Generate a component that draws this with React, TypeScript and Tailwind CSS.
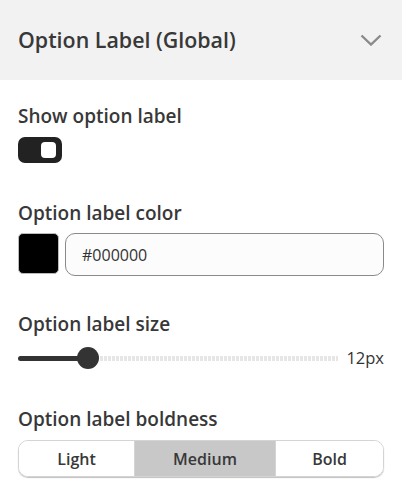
import { useState } from 'react';

const font = { fontFamily: '"Open Sans", "Noto Sans", sans-serif' };

function Label({ children, className = '' }: { children: string; className?: string }) {
  return (
    <div className={`text-[19px] leading-[24px] font-[550] text-[#383838] ${className}`}>{children}</div>
  );
}

const options = [
  { name: 'Light', width: 'w-[115px]' },
  { name: 'Medium', width: 'w-[141px]' },
  { name: 'Bold', width: 'flex-1' },
];

export default function App() {
  const [weight, setWeight] = useState('Medium');
  const [on, setOn] = useState(true);

  return (
    <div className="w-[402px] h-[492px] bg-white overflow-hidden" style={font}>
      <div className="h-20 bg-[#f2f2f2] pl-[18px] pr-[20px] flex items-center justify-between">
        <h2 className="text-[21.4px] font-[550] text-[#383838]">Option Label (Global)</h2>
        <svg width="22" height="12" viewBox="0 0 22 12" fill="none">
          <polyline points="1.5,1.5 11,10.5 20.5,1.5" stroke="#8a8a8a" strokeWidth="2.4" />
        </svg>
      </div>

      <div className="px-[18px]">
        <Label className="mt-6">Show option label</Label>
        <button
          onClick={() => setOn(!on)}
          className="mt-[9px] w-[44px] h-[26px] rounded-[7px] bg-[#222] flex items-center justify-end pr-[6px]"
        >
          <span className="w-[15px] h-[16px] rounded-[4px] bg-white" />
        </button>

        <Label className="mt-[38px]">Option label color</Label>
        <div className="mt-2 flex gap-[6px] items-start">
          <div className="w-[41px] h-[41px] rounded-[5px] bg-black border border-[#bbb]" />
          <div className="flex-1 h-[43px] rounded-[10px] border border-[#8a8a8a] bg-[#fcfcfc] flex items-center px-4 text-[16px] text-[#333]">
            #000000
          </div>
        </div>

        <Label className="mt-9">Option label size</Label>
        <div className="mt-[10px] h-6 flex items-center">
          <div className="relative w-[320px] h-6 flex items-center">
            <div className="w-[70px] h-[5px] rounded-full bg-[#333]" />
            <div className="ml-[12px] flex-1 h-[5px] bg-[repeating-linear-gradient(90deg,#e6e6e6_0_3px,transparent_3px_4px)]" />
            <div className="absolute left-[59px] top-[1px] w-[22px] h-[22px] rounded-full bg-[#333]" />
          </div>
          <span className="ml-auto text-[16.5px] text-[#333]">12px</span>
        </div>

        <Label className="mt-[37px]">Option label boldness</Label>
        <div className="mt-[9px] h-[37px] flex rounded-[10px] border border-[#d4d4d4] shadow-[0_1px_1px_rgba(0,0,0,0.25)] overflow-hidden">
          {options.map((o, i) => (
            <button
              key={o.name}
              onClick={() => setWeight(o.name)}
              className={`${o.width} text-[16px] font-[550] text-[#383838] ${i > 0 ? 'border-l border-[#d4d4d4]' : ''} ${
                weight === o.name ? 'bg-[#c8c8c8]' : 'bg-white'
              }`}
            >
              {o.name}
            </button>
          ))}
        </div>
      </div>
    </div>
  );
}
